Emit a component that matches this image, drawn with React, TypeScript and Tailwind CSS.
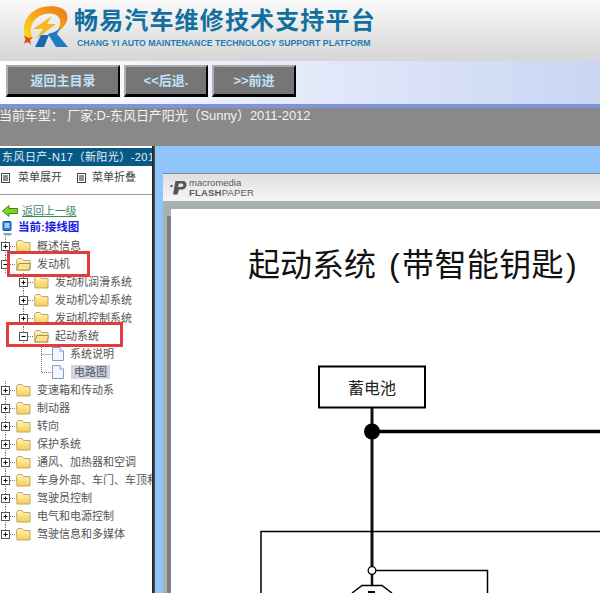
const CJK = "font-['Liberation_Sans','Noto_Sans_CJK_SC',sans-serif]";

function Logo() {
  return (
    <svg width="46" height="42" viewBox="0 0 46 42" className="shrink-0">
      <defs>
        <linearGradient id="ring" x1="0" y1="1" x2="1" y2="0">
          <stop offset="0" stopColor="#f9dc1e" />
          <stop offset="0.5" stopColor="#f7a81c" />
          <stop offset="1" stopColor="#ec7414" />
        </linearGradient>
      </defs>
      <path d="M3 32 C-3 20 4 6 18 1.5 C29 -1 41 0 44 8 C46 15 41 22 34 26 C38 19 39 12 33 9 C25 5 14 9 9.5 17 C7 23 7.5 28 10 32 Z" fill="url(#ring)" />
      <path d="M29 10 L10 23 L20 23 L13 33 L33 18 L24 18 Z" fill="#f6b81e" />
      <path d="M1 29 L5 32 L10 31 L7 34 L8 38.5 L4.5 36 L1 37.5 L2.5 33.5 Z" fill="#e5461a" />
      <path d="M12 41 L18 29 L26 29 L21 41 Z" fill="#1668b4" />
      <path d="M25 28 C30 27 34 25 38 21 L34 28 L45 41 L33 41 Z" fill="#1c7cc4" />
    </svg>
  );
}

function Header() {
  return (
    <div className="h-[61px] shrink-0 bg-gradient-to-b from-[#fafafa] to-[#d6d6d6] flex items-start pl-[23px] pt-[6px] gap-[5px]">
      <Logo />
      <div className="flex flex-col">
        <div className={`${CJK} text-[24px] leading-[30px] font-bold tracking-[1.15px] text-[#12709f] whitespace-nowrap`}>畅易汽车维修技术支持平台</div>
        <div className="font-['Liberation_Sans',sans-serif] text-[8.7px] leading-[11px] mt-[2px] ml-[3px] font-bold text-[#1c7cae] whitespace-nowrap">CHANG YI AUTO MAINTENANCE TECHNOLOGY SUPPORT PLATFORM</div>
      </div>
    </div>
  );
}

function NavButton({ label, width }: { label: string; width: string }) {
  return (
    <div className={`${width} ${CJK} h-[32px] flex items-center justify-center bg-[#767676] border-t-2 border-l-2 border-t-[#a8a8a8] border-l-[#b0b0b0] border-b-[3px] border-r-2 border-b-black border-r-black text-[13px] font-bold text-[#bfe2fa]`}>
      {label}
    </div>
  );
}

function Nav() {
  return (
    <div className="h-[47px] shrink-0 flex flex-col">
      <div className="h-[43px] bg-gradient-to-r from-white to-[#c9d5f3] flex items-start pt-[4px] pl-[6px] gap-[4px]">
        <NavButton label="返回主目录" width="w-[114px]" />
        <NavButton label="<<后退." width="w-[84px]" />
        <NavButton label=">>前进" width="w-[84px]" />
      </div>
      <div className="h-[4px] bg-[#7f93da]" />
    </div>
  );
}

function InfoBar() {
  return (
    <div className={`${CJK} h-[38px] shrink-0 bg-[#898989] text-[13px] leading-[15px] tracking-[-0.08px] text-[#f2f2f2] whitespace-nowrap`}>
      <span className="-ml-[1px] block">当前车型： 厂家:D-东风日产阳光（Sunny）2011-2012</span>
    </div>
  );
}

function MenuIcon() {
  return (
    <svg width="9" height="10" viewBox="0 0 9 10" className="shrink-0 block">
      <rect x="0.5" y="0.5" width="8" height="9" fill="#fff" stroke="#444" />
      <path d="M2 3h5M2 5h5M2 7h5" stroke="#222" />
    </svg>
  );
}

function Toggle({ open, last }: { open?: boolean; last?: boolean }) {
  return (
    <svg width="16" height="18" viewBox="0 0 16 18" className="shrink-0">
      <path d={last ? "M5.5 0V5" : "M5.5 0V5M5.5 13V18"} stroke="#777" strokeDasharray="1 1" fill="none" />
      <path d="M10 9.5H16" stroke="#777" strokeDasharray="1 1" fill="none" />
      <rect x="1.5" y="5.5" width="8" height="8" fill="#fff" stroke="#555" />
      <path d="M3.5 9.5h4" stroke="#000" />
      {!open && <path d="M5.5 7.5v4" stroke="#000" />}
    </svg>
  );
}

function Folder({ open }: { open?: boolean }) {
  return (
    <svg width="15" height="14" viewBox="0 0 15 14" className="shrink-0">
      <defs>
        <linearGradient id="fold" x1="0" y1="0" x2="0" y2="1">
          <stop offset="0" stopColor="#fff6c0" />
          <stop offset="1" stopColor="#f6cd50" />
        </linearGradient>
      </defs>
      <path d="M0.5 3.5 L2 1.5 H6 L7.5 3.5 H14 V13 H1 Z" fill="url(#fold)" stroke="#bda868" />
      {open && <path d="M0.5 13 L3 6.5 H14.5 L13 13 Z" fill="#fbe28a" stroke="#a8934e" />}
    </svg>
  );
}

function FileConnector({ last }: { last?: boolean }) {
  return (
    <svg width="16" height="18" viewBox="0 0 16 18" className="shrink-0">
      <path d={last ? "M5.5 0V9.5H16" : "M5.5 0V18M5.5 9.5H16"} stroke="#777" strokeDasharray="1 1" fill="none" />
    </svg>
  );
}

function FileIcon() {
  return (
    <svg width="12" height="14" viewBox="0 0 12 14" className="shrink-0">
      <path d="M0.5 0.5 H8 L11.5 4 V13.5 H0.5 Z" fill="#f3f7fd" stroke="#7f9cc8" />
      <path d="M8 0.5 V4 H11.5" fill="#fff" stroke="#7f9cc8" />
    </svg>
  );
}

function TreeText({ children, selected }: { children: string; selected?: boolean }) {
  return (
    <span className={`${CJK} text-[11px] leading-[14px] text-[#555] whitespace-nowrap ${selected ? "bg-[#ccd6e6] px-[3px] ml-[7px]" : "ml-[6px]"}`}>
      {children}
    </span>
  );
}

function Top({ label, open, last }: { label: string; open?: boolean; last?: boolean }) {
  return (
    <div className="h-[18px] flex items-center">
      <Toggle open={open} last={last} />
      <Folder open={open} />
      <TreeText>{label}</TreeText>
    </div>
  );
}

function Sub({ label, open }: { label: string; open?: boolean }) {
  return (
    <div className="h-[18px] flex items-center pl-[18px]">
      <Toggle open={open} />
      <Folder open={open} />
      <TreeText>{label}</TreeText>
    </div>
  );
}

function Leaf({ label, last, selected }: { label: string; last?: boolean; selected?: boolean }) {
  return (
    <div className="h-[18px] flex items-center pl-[36px]">
      <FileConnector last={last} />
      <FileIcon />
      <TreeText selected={selected}>{label}</TreeText>
    </div>
  );
}

function Sidebar() {
  return (
    <div className="w-[152px] shrink-0 bg-white flex flex-col overflow-hidden">
      <div className={`${CJK} h-[18px] mt-[2px] shrink-0 bg-[#075a86] text-[11px] leading-[18px] tracking-[0.45px] text-[#e8f0f5] pl-[2px] whitespace-nowrap overflow-hidden`}>
        东风日产-N17（新阳光）-2013
      </div>
      <div className={`${CJK} h-[29px] shrink-0 flex items-center pl-[1px] border-b border-[#9a9a9a] text-[11px] text-[#444] pb-[5px]`}>
        <MenuIcon />
        <span className="ml-[8px]">菜单展开</span>
        <span className="ml-[15px]"><MenuIcon /></span>
        <span className="ml-[6px]">菜单折叠</span>
      </div>
      <div className="h-[18px] mt-[7px] flex items-center pl-[2px] shrink-0">
        <svg width="16" height="12" viewBox="0 0 16 12" className="shrink-0">
          <path d="M0.5 6 L7 0.5 V3.5 H15.5 V8.5 H7 V11.5 Z" fill="#7fd128" stroke="#3f8a16" />
        </svg>
        <span className={`${CJK} ml-[4px] text-[11px] tracking-[-0.1px] text-[#3c8a68] underline`}>返回上一级</span>
      </div>
      <div className="h-[16px] flex items-center pl-[2px] shrink-0">
        <svg width="11" height="15" viewBox="0 0 11 15" className="shrink-0">
          <rect x="1" y="0.5" width="8" height="9" rx="1" fill="#2f7fe0" stroke="#1a4fa0" />
          <rect x="2.5" y="2" width="5" height="5" fill="#9ed0f8" />
          <path d="M1 12 H10 L9 14.5 H2 Z" fill="#9aa4b4" />
        </svg>
        <span className={`${CJK} ml-[5px] text-[11.5px] font-bold text-[#1a22e0]`}>当前:接线图</span>
      </div>
      <div className="mt-[1px] flex flex-col">
        <Top label="概述信息" />
        <Top label="发动机" open />
        <Sub label="发动机润滑系统" />
        <Sub label="发动机冷却系统" />
        <Sub label="发动机控制系统" />
        <Sub label="起动系统" open />
        <Leaf label="系统说明" />
        <Leaf label="电路图" last selected />
        <Top label="变速箱和传动系" />
        <Top label="制动器" />
        <Top label="转向" />
        <Top label="保护系统" />
        <Top label="通风、加热器和空调" />
        <Top label="车身外部、车门、车顶和" />
        <Top label="驾驶员控制" />
        <Top label="电气和电源控制" />
        <Top label="驾驶信息和多媒体" last />
      </div>
    </div>
  );
}

function FlashBar() {
  return (
    <div className="h-[28px] shrink-0 bg-gradient-to-b from-[#dfdfdf] to-[#f6f6f6] border-t border-[#7d8a92] flex items-center pl-[7px] gap-[2px]">
      <svg width="17" height="15" viewBox="0 0 17 15" className="shrink-0">
        <circle cx="1.5" cy="6" r="1.3" fill="#666" />
        <path d="M5.5 1 H13 C18 1 17.5 9 12.5 9.5 H9 L7.5 14.5 H3 Z M8.9 3.5 L8 7 H11.5 C13.8 7 14 3.5 11.8 3.5 Z" fill="#555" fillRule="evenodd" />
      </svg>
      <div className="font-['Liberation_Sans',sans-serif] flex flex-col text-[#5a5a5a] whitespace-nowrap">
        <span className="text-[9.5px] leading-[8px] pt-[1px]">macromedia</span>
        <span className="text-[9.5px] leading-[10px] mt-[1px] tracking-[0.2px] font-bold">FLASH<span className="font-normal">PAPER</span></span>
      </div>
    </div>
  );
}

function Diagram() {
  const cjk = "'Noto Sans CJK SC', sans-serif";
  const lat = "'Liberation Sans', sans-serif";
  return (
    <svg width="429" height="384" viewBox="171 209 429 384" className="block">
      <text y="276" fontSize="32" fontFamily={cjk} fill="#111">
        <tspan x="248">起动系统</tspan>
        <tspan x="389" fontFamily={lat}>(</tspan>
        <tspan x="402" letterSpacing="0.4">带智能钥匙</tspan>
        <tspan x="566" fontFamily={lat}>)</tspan>
      </text>
      <rect x="319" y="366.5" width="106" height="41" fill="#fff" stroke="#000" strokeWidth="2" />
      <text x="372" y="394" fontSize="16" textAnchor="middle" fontFamily={cjk} fill="#222">蓄电池</text>
      <path d="M372 408V570" stroke="#111" strokeWidth="3" />
      <circle cx="372" cy="431.5" r="8" fill="#000" />
      <path d="M372 431.5H600" stroke="#000" strokeWidth="3.5" />
      <path d="M261 593V531.5H600" fill="none" stroke="#000" strokeWidth="1.5" />
      <path d="M372 574V586" stroke="#111" strokeWidth="2.5" />
      <path d="M376 570.5H487.5V593" fill="none" stroke="#000" strokeWidth="1.5" />
      <circle cx="372" cy="570.5" r="3.8" fill="#fff" stroke="#000" strokeWidth="1.3" />
      <path d="M352 593L362 585.5H382L392 593" fill="#fff" stroke="#000" strokeWidth="1.5" />
      <rect x="368" y="591" width="7" height="2" fill="#000" />
    </svg>
  );
}

function Viewer() {
  return (
    <div className="flex-1 min-w-0 bg-[#8fc5fb] pl-[8px] pt-[27px] flex flex-col">
      <FlashBar />
      <div className="flex-1 min-h-0 bg-[#a9b0b0] pt-[8px] pl-[4px] flex overflow-hidden">
        <div className="w-[4px] shrink-0 mt-[7px] bg-[#7f7f7f]" />
        <div className="flex-1 bg-white overflow-hidden">
          <Diagram />
        </div>
      </div>
    </div>
  );
}

export default function App() {
  return (
    <div className="w-[600px] h-[593px] flex flex-col overflow-hidden bg-white">
      <Header />
      <Nav />
      <InfoBar />
      <div className="flex-1 min-h-0 flex relative">
        <Sidebar />
        <div className="w-[3px] shrink-0 bg-gradient-to-r from-[#1c1c24] to-[#555]" />
        <Viewer />
        <div className="absolute left-[7px] top-[105px] w-[83px] h-[26px] border-[3px] border-[#e23c3c]" />
        <div className="absolute left-[6px] top-[176px] w-[117px] h-[25px] border-[3px] border-[#e23c3c]" />
      </div>
    </div>
  );
}
